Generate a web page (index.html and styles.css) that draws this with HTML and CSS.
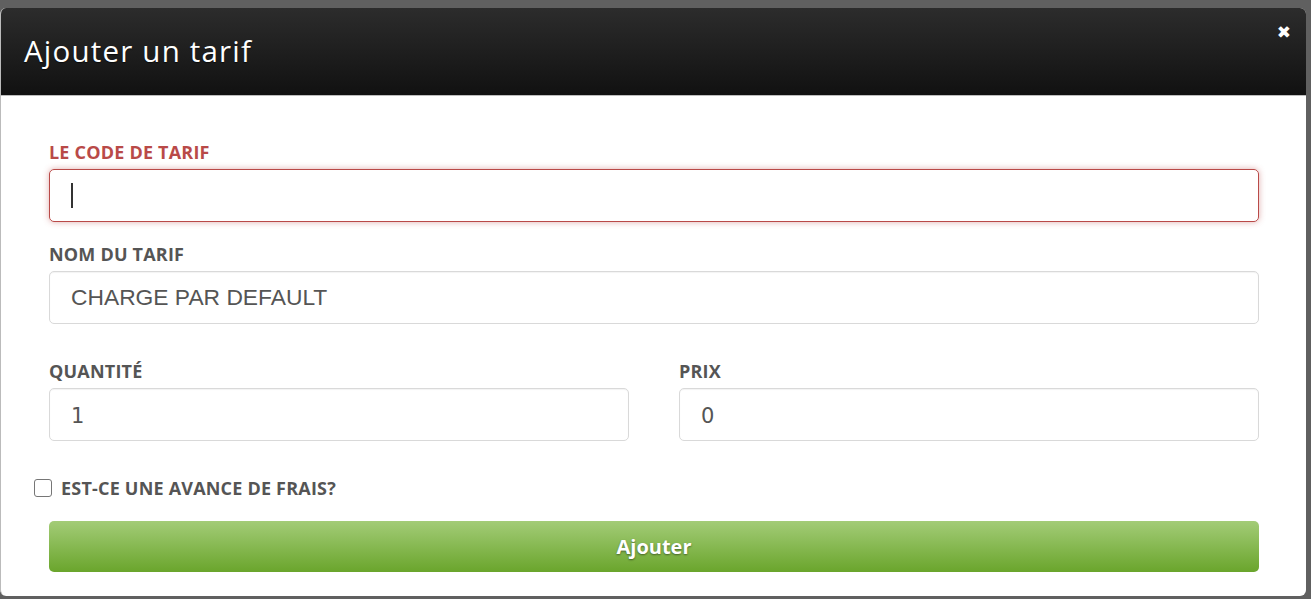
FILE: index.html
```html
<!DOCTYPE html>
<html lang="fr">
<head>
<meta charset="utf-8">
<title>Ajouter un tarif</title>
<link rel="stylesheet" href="styles.css">
</head>
<body>
<div class="backdrop">
  <div class="modal">
    <div class="modal-header">
      <h3 class="modal-title">Ajouter un tarif</h3>
      <span class="close">&#x2716;</span>
    </div>
    <form class="modal-body">
      <div class="field error">
        <label class="label">Le code de tarif</label>
        <div class="input"><span class="caret"></span></div>
      </div>
      <div class="field">
        <label class="label">Nom du tarif</label>
        <div class="input text">CHARGE PAR DEFAULT</div>
      </div>
      <div class="row">
        <div class="field">
          <label class="label">Quantité</label>
          <div class="input num">1</div>
        </div>
        <div class="field">
          <label class="label">Prix</label>
          <div class="input num">0</div>
        </div>
      </div>
      <div class="check">
        <span class="box"></span>
        <span class="label">Est-ce une avance de frais?</span>
      </div>
      <button type="button" class="btn">Ajouter</button>
    </form>
  </div>
</div>
</body>
</html>
```

FILE: styles.css
```css
html, body {
  margin: 0;
  padding: 0;
  height: 100%;
}
body {
  background: #606060;
  font-family: "Open Sans", "Noto Sans", sans-serif;
  overflow: hidden;
}
.backdrop {
  padding: 8px 5px 0 0;
}
.modal {
  width: 1306px;
  height: 588px;
  background: #fff;
  border-radius: 6px;
  overflow: hidden;
  box-sizing: border-box;
  border-left: 1px solid #bbb;
}
.modal-header {
  height: 88px;
  background: linear-gradient(#2c2c2c, #111111);
  display: flex;
  align-items: flex-start;
  justify-content: space-between;
  padding: 0 15px 0 23px;
  box-sizing: border-box;
  border-bottom: 1px solid #bdbdbd;
}
.modal-title {
  margin: 0;
  padding-top: 23px;
  color: #fff;
  font-weight: 400;
  font-size: 29.5px;
  letter-spacing: 1.2px;
  line-height: 40px;
  text-shadow: 0 1px 1px rgba(0,0,0,0.6);
}
.close {
  color: #fff;
  font-size: 17px;
  padding-top: 14px;
  font-family: "DejaVu Sans", sans-serif;
}
.modal-body {
  padding: 45px 47px 0 48px;
  display: flex;
  flex-direction: column;
}
.field {
  display: flex;
  flex-direction: column;
}
.label {
  font-weight: 700;
  font-size: 18px;
  letter-spacing: 0.2px;
  line-height: 22px;
  text-transform: uppercase;
  color: #555;
  margin-bottom: 6px;
}
.error .label {
  color: #b94a48;
}
.input {
  height: 53px;
  box-sizing: border-box;
  border: 1px solid #d9d9d9;
  border-radius: 5px;
  padding: 0 21px;
  display: flex;
  align-items: center;
  font-family: "Liberation Sans", Arial, sans-serif;
  font-size: 22.8px;
  color: #555;
  box-shadow: inset 0 1px 1px rgba(0,0,0,0.05);
}
.error .input {
  border-color: #b94a48;
  box-shadow: 0 0 6px rgba(185,74,72,0.45);
}
.caret {
  width: 2px;
  height: 25px;
  background: #333;
}
.input.num {
  font-family: "DejaVu Sans", Verdana, sans-serif;
  font-size: 21px;
  padding-top: 3px;
}
.field + .field {
  margin-top: 21px;
}
.row .field + .field {
  margin-top: 0;
}
.row {
  display: grid;
  grid-template-columns: 1fr 1fr;
  column-gap: 50px;
  margin-top: 36px;
}
.check {
  display: flex;
  align-items: center;
  margin: 36px 0 0 -15px;
  gap: 9px;
}
.check .label {
  margin: 0;
}
.box {
  width: 18px;
  height: 18px;
  box-sizing: border-box;
  border: 1px solid #767676;
  border-radius: 3px;
  background: #fff;
}
.btn {
  margin-top: 22px;
  height: 51px;
  border: 0;
  border-radius: 5px;
  background: linear-gradient(#a3cc77, #6aa52c);
  color: #fff;
  font-family: "Open Sans", "Noto Sans", sans-serif;
  font-weight: 700;
  font-size: 20px;
  text-shadow: 0 1px 2px rgba(0,0,0,0.45);
  cursor: pointer;
}
```
